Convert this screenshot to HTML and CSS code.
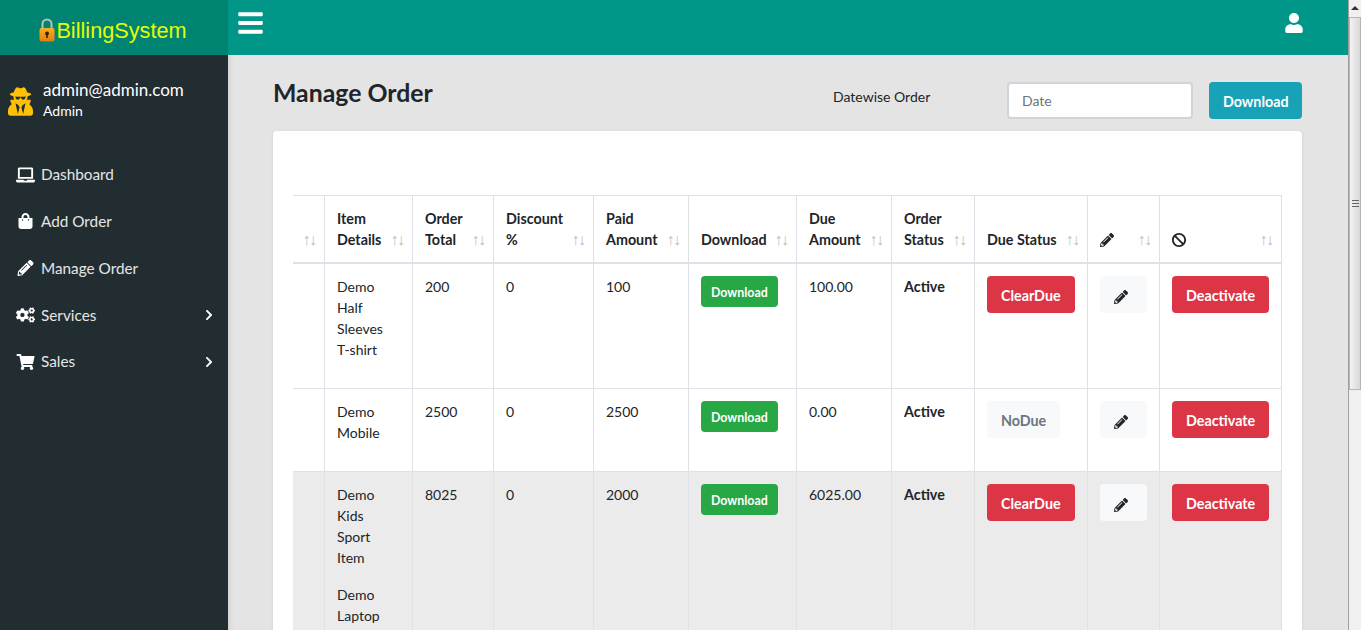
FILE: index.html
```html
<!DOCTYPE html>
<html lang="en">

<head>
  <meta charset="UTF-8">
  <meta name="viewport" content="width=device-width, initial-scale=1.0">
  <title>Manage Order</title>
  <link rel="stylesheet" href="styles.css">
</head>

<body>
  <svg class="sprite" xmlns="http://www.w3.org/2000/svg">
    <symbol id="i-pencil" viewBox="0 0 512 512"><path d="M497.9 142.1l-46.1 46.1c-4.7 4.7-12.3 4.7-17 0l-111-111c-4.7-4.7-4.7-12.3 0-17l46.1-46.1c18.7-18.7 49.1-18.7 67.9 0l60.1 60.1c18.8 18.7 18.8 49.1 0 67.9zM284.2 99.8L21.6 362.4.4 483.9c-2.9 16.4 11.4 30.6 27.8 27.8l121.5-21.3 262.6-262.6c4.7-4.7 4.7-12.3 0-17l-111-111c-4.8-4.7-12.4-4.7-17.1 0zM124.1 339.9c-5.5-5.5-5.5-14.3 0-19.8l154-154c5.5-5.5 14.3-5.5 19.8 0s5.5 14.3 0 19.8l-154 154c-5.5 5.5-14.3 5.5-19.8 0zM88 424h48v36.3l-64.5 11.3-31.1-31.1L51.7 376H88v48z"/></symbol>
    <symbol id="i-chevron" viewBox="0 0 320 512"><path d="M285.476 272.971L91.132 467.314c-9.373 9.373-24.569 9.373-33.941 0l-22.667-22.667c-9.357-9.357-9.375-24.522-.04-33.901L188.505 256 34.484 101.255c-9.335-9.379-9.317-24.544.04-33.901l22.667-22.667c9.373-9.373 24.569-9.373 33.941 0L285.475 239.03c9.373 9.372 9.373 24.568.001 33.941z"/></symbol>
  </svg>

  <div class="layout">
    <aside class="sidebar">
      <div class="brand">
        <svg class="brand-lock" viewBox="0 0 16 24">
          <defs>
            <linearGradient id="lockbody" x1="0" y1="0" x2="0" y2="1">
              <stop offset="0" stop-color="#f9b21d"/>
              <stop offset="1" stop-color="#e37b12"/>
            </linearGradient>
          </defs>
          <path d="M3.5 11V6a4.5 4.5 0 0 1 9 0v5" fill="none" stroke="#b9c0bc" stroke-width="2"/>
          <rect x="0.5" y="10" width="15" height="13.5" rx="2" fill="url(#lockbody)"/>
          <circle cx="8" cy="15.5" r="2" fill="#33260f"/>
          <rect x="7.2" y="15.5" width="1.6" height="4.5" fill="#33260f"/>
        </svg>
        <span class="brand-name">BillingSystem</span>
      </div>

      <div class="profile">
        <svg class="profile-icon" viewBox="0 0 448 512"><path d="M383.9 308.3l23.9-62.6c4-10.5-3.7-21.7-15-21.7h-58.5c11-18.9 17.8-40.6 17.8-64v-.3c39.2-7.8 64-19.1 64-31.7 0-13.3-27.3-25.1-70.1-33-9.2-32.8-27-65.8-40.6-82.8-9.5-11.9-25.9-15.6-39.5-8.8l-27.6 13.8c-9 4.5-19.6 4.5-28.6 0L182.1 3.4c-13.6-6.8-30-3.1-39.5 8.8-13.5 17-31.4 50-40.6 82.8-42.7 7.9-70 19.7-70 33 0 12.6 24.8 23.9 64 31.7v.3c0 23.4 6.8 45.1 17.8 64H56.3c-11.5 0-19.2 11.7-14.7 22.3l25.8 60.2C27.3 329.8 0 372.7 0 422.4v44.8C0 491.9 20.1 512 44.8 512h358.4c24.7 0 44.8-20.1 44.8-44.8v-44.8c0-48.4-25.8-90.4-64.1-114.1zM176 480l-41.6-192 49.6 32 24 40-32 120zm96 0l-32-120 24-40 49.6-32L272 480zm41.7-298.5c-3.9 11.9-7 24.6-16.5 33.4-10.1 9.3-48 22.4-64-25-2.8-8.4-15.4-8.4-18.3 0-17 50.2-56 32.4-64 25-9.5-8.8-12.7-21.5-16.5-33.4-.8-2.5-6.3-5.7-6.3-5.8v-10.8c28.3 3.6 61 5.8 96 5.8s67.7-2.1 96-5.8v10.8c-.1.1-5.6 3.2-6.4 5.8z"/></svg>
        <div>
          <div class="profile-mail">admin@admin.com</div>
          <div class="profile-role">Admin</div>
        </div>
      </div>

      <nav class="menu">
        <a class="menu-item">
          <svg class="menu-icon" viewBox="0 0 640 512"><path d="M624 416H381.54c-.74 19.81-14.71 32-32.74 32H288c-18.69 0-33.02-17.47-32.77-32H16c-8.8 0-16 7.2-16 16v16c0 35.2 28.8 64 64 64h512c35.2 0 64-28.8 64-64v-16c0-8.8-7.2-16-16-16zM576 48c0-26.4-21.6-48-48-48H112C85.6 0 64 21.6 64 48v336h512V48zm-64 272H128V64h384v256z"/></svg>
          <span>Dashboard</span>
        </a>
        <a class="menu-item">
          <svg class="menu-icon" viewBox="0 0 448 512"><path d="M352 160v-32C352 57.42 294.579 0 224 0 153.42 0 96 57.42 96 128v32H0v272c0 44.183 35.817 80 80 80h288c44.183 0 80-35.817 80-80V160h-96zm-192-32c0-35.29 28.71-64 64-64s64 28.71 64 64v32H160v-32zm160 120c-13.255 0-24-10.745-24-24s10.745-24 24-24 24 10.745 24 24-10.745 24-24 24zm-192 0c-13.255 0-24-10.745-24-24s10.745-24 24-24 24 10.745 24 24-10.745 24-24 24z"/></svg>
          <span>Add Order</span>
        </a>
        <a class="menu-item">
          <svg class="menu-icon"><use href="#i-pencil"/></svg>
          <span>Manage Order</span>
        </a>
        <a class="menu-item">
          <svg class="menu-icon" viewBox="0 0 640 512"><path d="M512.1 191l-8.2 14.3c-3 5.3-9.4 7.5-15.1 5.4-11.8-4.4-22.6-10.7-32.1-18.6-4.6-3.8-5.8-10.5-2.8-15.7l8.2-14.3c-6.9-8-12.3-17.3-15.9-27.4h-16.5c-6 0-11.2-4.3-12.2-10.3-2-12-2.1-24.6 0-37.1 1-6 6.2-10.4 12.2-10.4h16.5c3.6-10.1 9-19.4 15.9-27.4l-8.2-14.3c-3-5.2-1.9-11.9 2.8-15.7 9.5-7.9 20.4-14.2 32.1-18.6 5.7-2.1 12.1.1 15.1 5.4l8.2 14.3c10.5-1.9 21.2-1.9 31.7 0L552 6.3c3-5.3 9.4-7.5 15.1-5.4 11.8 4.4 22.6 10.7 32.1 18.6 4.6 3.8 5.8 10.5 2.8 15.7l-8.2 14.3c6.9 8 12.3 17.3 15.9 27.4h16.5c6 0 11.2 4.3 12.2 10.3 2 12 2.1 24.6 0 37.1-1 6-6.2 10.4-12.2 10.4h-16.5c-3.6 10.1-9 19.4-15.9 27.4l8.2 14.3c3 5.2 1.9 11.9-2.8 15.7-9.5 7.9-20.4 14.2-32.1 18.6-5.7 2.1-12.1-.1-15.1-5.4l-8.2-14.3c-10.4 1.9-21.2 1.9-31.7 0zm-10.5-58.8c38.5 29.6 82.4-14.3 52.8-52.8-38.5-29.7-82.4 14.3-52.8 52.8zM386.3 286.1l33.7 16.8c10.1 5.8 14.5 18.1 10.5 29.1-8.9 24.2-26.4 46.4-42.6 65.8-7.4 8.9-20.2 11.1-30.3 5.3l-29.1-16.8c-16 13.7-34.6 24.6-54.9 31.7v33.6c0 11.6-8.3 21.6-19.7 23.6-24.6 4.2-50.4 4.4-75.9 0-11.5-2-20-11.9-20-23.6V418c-20.3-7.2-38.9-18-54.9-31.7L74 403c-10 5.8-22.9 3.6-30.3-5.3-16.2-19.4-33.3-41.6-42.2-65.7-4-10.9.4-23.2 10.5-29.1l33.3-16.8c-3.9-20.9-3.9-42.4 0-63.4L12 205.8c-10.1-5.8-14.6-18.1-10.5-29 8.9-24.2 26-46.4 42.2-65.8 7.4-8.9 20.2-11.1 30.3-5.3l29.1 16.8c16-13.7 34.6-24.6 54.9-31.7V57.1c0-11.5 8.2-21.5 19.6-23.5 24.6-4.2 50.5-4.4 76-.1 11.5 2 20 11.9 20 23.6v33.6c20.3 7.2 38.9 18 54.9 31.7l29.1-16.8c10-5.8 22.9-3.6 30.3 5.3 16.2 19.4 33.2 41.6 42.1 65.8 4 10.9.1 23.2-10 29.1l-33.7 16.8c3.9 21 3.9 42.5 0 63.5zm-117.6 21.1c59.2-77-28.7-164.9-105.7-105.7-59.2 77 28.7 164.9 105.7 105.7zm243.4 182.7l-8.2 14.3c-3 5.3-9.4 7.5-15.1 5.4-11.8-4.4-22.6-10.7-32.1-18.6-4.6-3.8-5.8-10.5-2.8-15.7l8.2-14.3c-6.9-8-12.3-17.3-15.9-27.4h-16.5c-6 0-11.2-4.3-12.2-10.3-2-12-2.1-24.6 0-37.1 1-6 6.2-10.4 12.2-10.4h16.5c3.6-10.1 9-19.4 15.9-27.4l-8.2-14.3c-3-5.2-1.9-11.9 2.8-15.7 9.5-7.9 20.4-14.2 32.1-18.6 5.7-2.1 12.1.1 15.1 5.4l8.2 14.3c10.5-1.9 21.2-1.9 31.7 0l8.2-14.3c3-5.3 9.4-7.5 15.1-5.4 11.8 4.4 22.6 10.7 32.1 18.6 4.6 3.8 5.8 10.5 2.8 15.7l-8.2 14.3c6.9 8 12.3 17.3 15.9 27.4h16.5c6 0 11.2 4.3 12.2 10.3 2 12 2.1 24.6 0 37.1-1 6-6.2 10.4-12.2 10.4h-16.5c-3.6 10.1-9 19.4-15.9 27.4l8.2 14.3c3 5.2 1.9 11.9-2.8 15.7-9.5 7.9-20.4 14.2-32.1 18.6-5.7 2.1-12.1-.1-15.1-5.4l-8.2-14.3c-10.4 1.9-21.2 1.9-31.7 0zM501.6 431c38.5 29.6 82.4-14.3 52.8-52.8-38.5-29.6-82.4 14.3-52.8 52.8z"/></svg>
          <span>Services</span>
          <svg class="menu-arrow"><use href="#i-chevron"/></svg>
        </a>
        <a class="menu-item">
          <svg class="menu-icon" viewBox="0 0 576 512"><path d="M528.12 301.319l47.273-208C578.806 78.301 567.391 64 551.99 64H159.208l-9.166-44.81C147.758 8.021 137.93 0 126.529 0H24C10.745 0 0 10.745 0 24v16c0 13.255 10.745 24 24 24h69.883l70.248 343.435C147.325 417.1 136 435.222 136 456c0 30.928 25.072 56 56 56s56-25.072 56-56c0-15.674-6.447-29.835-16.824-40h209.647C430.447 426.165 424 440.326 424 456c0 30.928 25.072 56 56 56s56-25.072 56-56c0-22.172-12.888-41.332-31.579-50.405l5.517-24.276c3.413-15.018-8.002-29.319-23.403-29.319H218.117l-6.545-32h293.145c11.206 0 20.92-7.754 23.403-18.681z"/></svg>
          <span>Sales</span>
          <svg class="menu-arrow"><use href="#i-chevron"/></svg>
        </a>
      </nav>
    </aside>

    <div class="main">
      <header class="topbar">
        <svg class="topbar-bars" viewBox="0 0 448 512"><path d="M16 132h416c8.837 0 16-7.163 16-16V76c0-8.837-7.163-16-16-16H16C7.163 60 0 67.163 0 76v40c0 8.837 7.163 16 16 16zm0 160h416c8.837 0 16-7.163 16-16v-40c0-8.837-7.163-16-16-16H16c-8.837 0-16 7.163-16 16v40c0 8.837 7.163 16 16 16zm0 160h416c8.837 0 16-7.163 16-16v-40c0-8.837-7.163-16-16-16H16c-8.837 0-16 7.163-16 16v40c0 8.837 7.163 16 16 16z"/></svg>
        <svg class="topbar-user" viewBox="0 0 448 512"><path d="M224 256c70.7 0 128-57.3 128-128S294.7 0 224 0 96 57.3 96 128s57.3 128 128 128zm89.6 32h-16.7c-22.2 10.2-46.9 16-72.9 16s-50.6-5.8-72.9-16h-16.7C60.2 288 0 348.2 0 422.4V464c0 26.5 21.5 48 48 48h352c26.5 0 48-21.5 48-48v-41.6c0-74.2-60.2-134.4-134.4-134.4z"/></svg>
      </header>

      <section class="content">
        <div class="page-head">
          <h1>Manage Order</h1>
          <span class="date-label">Datewise Order</span>
          <input class="date-input" type="text" placeholder="Date">
          <button class="btn btn-info">Download</button>
        </div>

        <div class="card">
          <table class="orders">
            <colgroup>
              <col class="c1"><col class="c2"><col class="c3"><col class="c4"><col class="c5"><col class="c6">
              <col class="c7"><col class="c8"><col class="c9"><col class="c10"><col class="c11">
            </colgroup>
            <thead>
              <tr>
                <th></th>
                <th>Item Details</th>
                <th>Order Total</th>
                <th>Discount %</th>
                <th>Paid Amount</th>
                <th>Download</th>
                <th>Due Amount</th>
                <th>Order Status</th>
                <th>Due Status</th>
                <th><svg class="th-icon"><use href="#i-pencil"/></svg></th>
                <th>
                  <svg class="th-icon" viewBox="8 8 496 496"><path d="M256 8C119.034 8 8 119.033 8 256s111.034 248 248 248 248-111.034 248-248S392.967 8 256 8zm130.108 117.892c65.448 65.448 70 165.481 20.677 235.637L150.47 105.216c70.204-49.356 170.226-44.735 235.638 20.676zM125.892 386.108c-65.448-65.448-70-165.481-20.677-235.637L361.53 406.784c-70.203 49.356-170.226 44.736-235.638-20.676z"/></svg>
                </th>
              </tr>
            </thead>
            <tbody>
              <tr>
                <td></td>
                <td><p>Demo Half Sleeves <span class="nowrap">T-shirt</span></p></td>
                <td>200</td>
                <td>0</td>
                <td>100</td>
                <td><button class="btn btn-small">Download</button></td>
                <td>100.00</td>
                <td><b>Active</b></td>
                <td><button class="btn btn-danger">ClearDue</button></td>
                <td><button class="btn btn-light"><svg class="btn-icon"><use href="#i-pencil"/></svg></button></td>
                <td><button class="btn btn-danger">Deactivate</button></td>
              </tr>
              <tr>
                <td></td>
                <td><p>Demo Mobile</p></td>
                <td>2500</td>
                <td>0</td>
                <td>2500</td>
                <td><button class="btn btn-small">Download</button></td>
                <td>0.00</td>
                <td><b>Active</b></td>
                <td><button class="btn btn-muted">NoDue</button></td>
                <td><button class="btn btn-light"><svg class="btn-icon"><use href="#i-pencil"/></svg></button></td>
                <td><button class="btn btn-danger">Deactivate</button></td>
              </tr>
              <tr class="row-hover">
                <td></td>
                <td><p>Demo Kids Sport Item</p><p>Demo Laptop</p></td>
                <td>8025</td>
                <td>0</td>
                <td>2000</td>
                <td><button class="btn btn-small">Download</button></td>
                <td>6025.00</td>
                <td><b>Active</b></td>
                <td><button class="btn btn-danger">ClearDue</button></td>
                <td><button class="btn btn-light"><svg class="btn-icon"><use href="#i-pencil"/></svg></button></td>
                <td><button class="btn btn-danger">Deactivate</button></td>
              </tr>
            </tbody>
          </table>
        </div>
      </section>
    </div>

    <div class="scrollbar">
      <div class="scroll-btn"><span class="scroll-up"></span></div>
      <div class="scroll-thumb"><span class="scroll-grip"></span></div>
    </div>
  </div>
</body>

</html>
```

FILE: styles.css
```css
* {
  box-sizing: border-box;
}

html,
body {
  height: 100%;
}

body {
  margin: 0;
  overflow: hidden;
  background: #e4e4e4;
  color: #212529;
  font-family: Lato, sans-serif;
  font-size: 14px;
  line-height: 21px;
}

.sprite {
  display: none;
}

.layout {
  display: flex;
  height: 630px;
  overflow: hidden;
}

/* sidebar */
.sidebar {
  flex: 0 0 228px;
  background: #222d32;
  color: #fff;
}

.brand {
  display: flex;
  align-items: center;
  justify-content: center;
  height: 55px;
  padding: 6px 2px 0 0;
  background: #008371;
}

.brand-lock {
  width: 16px;
  height: 24px;
  margin: 0 1px 2px 0;
}

.brand-name {
  color: #e4ff00;
  font-family: "Liberation Sans", sans-serif;
  font-size: 21.7px;
}

.profile {
  display: flex;
  align-items: center;
  gap: 10px;
  padding: 24px 8px 0;
}

.profile-icon {
  width: 25px;
  height: 29px;
  margin-top: 2px;
  fill: #ffc107;
}

.profile-mail {
  font-size: 17px;
  line-height: 21px;
}

.profile-role {
  font-size: 14px;
  line-height: 21px;
}

.menu {
  display: flex;
  flex-direction: column;
  padding-top: 30.3px;
}

.menu-item {
  display: flex;
  align-items: center;
  height: 46.8px;
  padding: 0 14px 0 16px;
  color: #e6e6e6;
  font-size: 15.3px;
}

.menu-icon {
  width: 19px;
  height: 16px;
  margin-right: 6px;
  fill: #fff;
}

.menu-arrow {
  width: 10px;
  height: 12px;
  margin-left: auto;
  fill: #fff;
}

/* main column */
.main {
  flex: 1;
  min-width: 0;
  box-shadow: inset 6px 0 6px -6px rgba(0, 0, 0, 0.15);
}

.topbar {
  display: flex;
  justify-content: space-between;
  align-items: flex-start;
  height: 55px;
  padding: 9px 45px 0 10px;
  background: #009688;
}

.topbar-bars {
  width: 25px;
  height: 28px;
  fill: #fff;
}

.topbar-user {
  width: 18px;
  height: 20px;
  margin-top: 4px;
  fill: #fff;
}

.content {
  padding: 27px 46px 0 45px;
}

.page-head {
  display: flex;
  align-items: center;
  height: 37px;
}

.page-head h1 {
  flex: 0 0 560px;
  margin: 0 0 16px;
  font-size: 24.8px;
  font-weight: 700;
  line-height: 32px;
}

.date-label {
  flex: 0 0 174px;
  margin-bottom: 8px;
  font-size: 14px;
}

.date-input {
  width: 186px;
  height: 37px;
  margin-right: 16px;
  padding: 0 13px;
  border: 2px solid #ced4da;
  border-radius: 4px;
  background: #fff;
  font: 14px Lato, sans-serif;
}

.date-input::placeholder {
  color: #6c757d;
}

.btn {
  height: 37px;
  padding: 1px 14px 0;
  border: 0;
  border-radius: 4px;
  color: #fff;
  font: 700 14.3px Lato, sans-serif;
  vertical-align: top;
}

.btn-info {
  width: 93px;
  background: #17a2b8;
}

.btn-danger {
  background: #dc3545;
}

.btn-light {
  width: 47px;
  padding: 0;
  background: #f8f9fa;
}

.btn-muted {
  background: #f8f9fa;
  color: #6c757d;
}

.btn-small {
  height: 31px;
  padding: 1px 10px 0;
  background: #28a745;
  font-size: 12.4px;
}

.btn-icon {
  display: block;
  width: 14px;
  height: 14px;
  margin: 5px 0 0 14px;
  fill: #212529;
}

/* table card */
.card {
  height: 600px;
  margin-top: 12px;
  padding: 64px 20px 0;
  border-radius: 4px;
  background: #fff;
  box-shadow: 0 1px 3px rgba(0, 0, 0, 0.12);
}

.orders {
  width: 989px;
  border-collapse: separate;
  border-spacing: 0;
  table-layout: fixed;
}

.c1 { width: 32px; }
.c2 { width: 88px; }
.c3 { width: 81px; }
.c4 { width: 100px; }
.c5 { width: 95px; }
.c6 { width: 108px; }
.c7 { width: 95px; }
.c8 { width: 83px; }
.c9 { width: 113px; }
.c10 { width: 72px; }
.c11 { width: 122px; }

.orders th,
.orders td {
  padding: 12px;
  border-right: 1px solid #dee2e6;
  border-bottom: 1px solid #dee2e6;
  vertical-align: top;
  text-align: left;
}

.orders th {
  position: relative;
  padding-right: 24px;
  border-top: 1px solid #dee2e6;
  border-bottom-width: 2px;
  font-size: 14.3px;
  vertical-align: bottom;
}

.orders b {
  font-size: 14.3px;
}

.nowrap {
  white-space: nowrap;
}

/* sort arrows sit over the header cell */
.orders th::before,
.orders th::after {
  position: absolute;
  bottom: 12px;
  color: #212529;
  font-family: "Liberation Sans", sans-serif;
  font-size: 16px;
  font-weight: 400;
  opacity: 0.3;
}

.orders th::before {
  right: 13.5px;
  content: "\2191";
}

.orders th::after {
  right: 7px;
  content: "\2193";
}

.orders p {
  margin: 0 0 16px;
}

.row-hover td {
  background: #ebebeb;
}

.th-icon {
  display: block;
  width: 14px;
  height: 14px;
  margin-bottom: 3px;
  fill: #212529;
}

/* fake window scrollbar */
.scrollbar {
  display: flex;
  flex: 0 0 13px;
  flex-direction: column;
  background: #f0f0f0;
  border-left: 1px solid #a0a0a0;
}

.scroll-btn {
  display: flex;
  justify-content: center;
  height: 17px;
  padding-top: 6px;
}

.scroll-up {
  width: 0;
  height: 0;
  border: 4px solid transparent;
  border-top: 0;
  border-bottom-color: #333;
}

.scroll-thumb {
  display: flex;
  justify-content: center;
  align-items: center;
  height: 373px;
  border: 1px solid #b5b5b5;
  background: linear-gradient(to right, #f3f3f3, #d8d8d8);
}

.scroll-grip {
  width: 7px;
  height: 7px;
  background: repeating-linear-gradient(to bottom, #666 0 1px, transparent 1px 3px);
}
```
